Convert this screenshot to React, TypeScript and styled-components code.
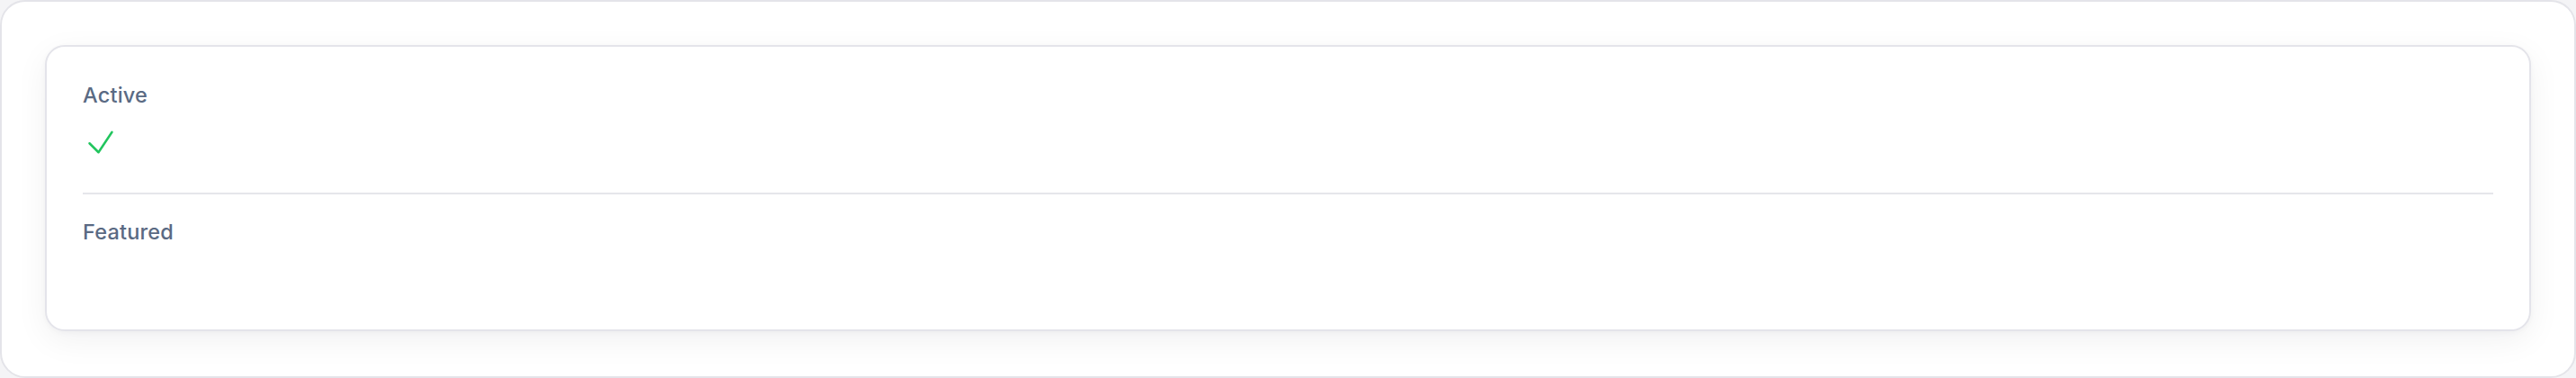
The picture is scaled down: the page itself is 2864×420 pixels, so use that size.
import React from "react";
import styled, {createGlobalStyle} from "styled-components";

const GlobalStyle = createGlobalStyle`
  html, body {
    margin: 0;
    padding: 0;
    background: #f4f4f6;
  }

  * {
    box-sizing: border-box;
  }
`

type Field = {
  label: string;
  value: boolean;
};

const fields: Array<Field> = [
  {label: "Active", value: true},
  {label: "Featured", value: false},
];

function CheckIcon() {
  return (
    <svg width="40" height="40" viewBox="0 0 24 24" fill="none" stroke="currentColor" strokeWidth="1.5">
      <path strokeLinecap="round" strokeLinejoin="round" d="m4.5 12.75 6 6 9-13.5"/>
    </svg>
  );
}

function App() {
  return (
    <>
      <GlobalStyle/>
      <Frame>
        <Card>
          {fields.map((field, i) => (
            <FieldRow key={field.label} first={i === 0} last={i === fields.length - 1}>
              <Label>{field.label}</Label>
              <Value>
                {field.value && <CheckIcon/>}
              </Value>
            </FieldRow>
          ))}
        </Card>
      </Frame>
    </>
  );
}

const Frame = styled.div`
  width: 2864px;
  height: 420px;
  padding: 48px 48px 50px;
  background: #ffffff;
  border: 2px solid #e4e4e9;
  border-radius: 28px;
`

const Card = styled.div`
  background: #ffffff;
  border: 2px solid #e4e4ea;
  border-radius: 22px;
  padding: 38px 40px 36px;
  box-shadow: 0 10px 36px rgba(20, 20, 40, 0.06), 0 2px 6px rgba(20, 20, 40, 0.03);
`

const FieldRow = styled.div<{ first: boolean; last: boolean }>`
  display: flex;
  flex-direction: column;
  padding-top: ${p => p.first ? "0" : "26px"};
  padding-bottom: ${p => p.last ? "0" : "36px"};
  border-bottom: ${p => p.last ? "none" : "2px solid #e5e6eb"};
`

const Label = styled.div`
  font-family: "Inter", "Noto Sans", sans-serif;
  font-size: 23.5px;
  line-height: 32px;
  font-weight: 500;
  letter-spacing: 0.2px;
  color: #5a6a83;
`

const Value = styled.div`
  margin-top: 16px;
  height: 40px;
  display: flex;
  align-items: center;
  color: #22c55e;
`

export default App;
